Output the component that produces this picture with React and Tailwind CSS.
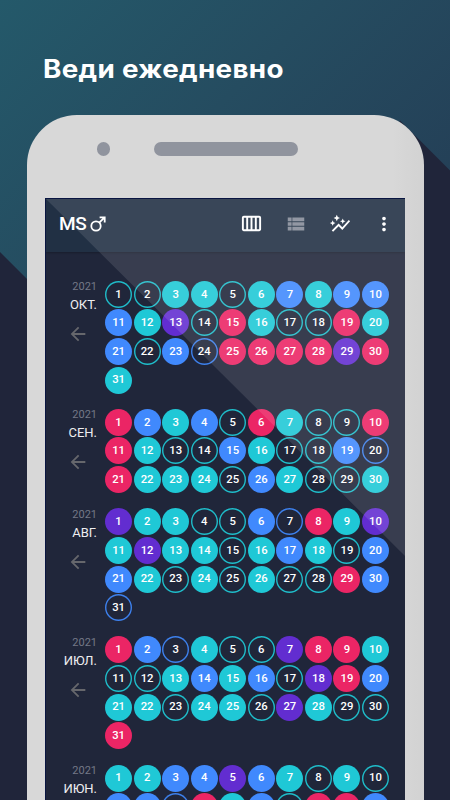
import { MdArrowBack, MdAutoGraph, MdMoreVert, MdOutlineCalendarViewWeek } from 'react-icons/md';

// t/b/p/r - filled days, T/B - outlined days
const dayStyles = {
  t: 'bg-[#1fc8d6]',
  b: 'bg-[#4089fd]',
  p: 'bg-[#622dd0]',
  r: 'bg-[#eb2565]',
  T: 'shadow-[inset_0_0_0_1.4px_#1fbcc9]',
  B: 'shadow-[inset_0_0_0_1.4px_#3d80ec]',
};

const months = [
  { year: 2021, name: 'ОКТ.', days: 'TTttTtbtbb' + 'btpTrtTTrt' + 'bTbBrrrrpr' + 't' },
  { year: 2021, name: 'СЕН.', days: 'rbtbTrtTTr' + 'rtTTbtTTbB' + 'rtttTbtTTt' },
  { year: 2021, name: 'АВГ.', days: 'pttTTbBrtp' + 'tpttTtbtTb' + 'btTtTtTTrb' + 'B' },
  { year: 2021, name: 'ИЮЛ.', days: 'rbBtTTprrt' + 'TTtbtbTprb' + 'ttTttTptTT' + 'r' },
  { year: 2021, name: 'ИЮН.', days: 'ttbbpbtTtT' + 'bbBrtbTrrb' },
];

const MaleIcon = () => (
  <svg viewBox="0 0 16 16" className="ml-[3.5px] h-[16px] w-[16px]" fill="none" stroke="#fff" strokeWidth="1.8">
    <circle cx="6" cy="10" r="4.7" />
    <path d="M9.3 6.7 14.6 1.4M9.6 1.4h5.1v5.1" />
  </svg>
);

const ListIcon = () => (
  <svg viewBox="0 0 24 24" className="h-[22px] w-[22px]" fill="#858b98">
    <path d="M3 14h4.2v-4H3v4zm0 5h4.2v-4H3v4zM3 9h4.2V5H3v4zm5 5h13v-4H8v4zm0 5h13v-4H8v4zM8 5v4h13V5H8z" />
  </svg>
);

const Header = () => (
  <header className="flex h-[53px] shrink-0 items-center bg-[#213044] pb-[4px] pl-[13px] pr-[10px] text-white shadow-[0_1px_2px_rgba(0,0,0,0.25)]">
    <span className="text-[19px] font-medium leading-none tracking-[-0.3px]">MS</span>
    <MaleIcon />
    <div className="ml-auto flex items-center">
      <MdOutlineCalendarViewWeek className="h-[23px] w-[23px]" />
      <div className="ml-[22px]">
        <ListIcon />
      </div>
      <MdAutoGraph className="ml-[22px] h-[22px] w-[22px]" />
      <MdMoreVert className="ml-[22px] h-[22px] w-[22px]" />
    </div>
  </header>
);

const Month = ({ month }) => (
  <section className="flex pb-[13.8px]">
    <div className="flex w-[51px] shrink-0 flex-col items-end">
      <span className="text-[11px] leading-[13px] text-[#747887]">{month.year}</span>
      <span className="mt-[4px] text-[13px] leading-[15px] text-[#eeeef0]">{month.name}</span>
      <MdArrowBack className="mr-[8px] mt-[11px] h-[22px] w-[22px] text-[#66676c]" />
    </div>
    <div className="ml-[7.3px] grid grid-cols-[repeat(10,28.56px)] auto-rows-[28.57px] content-start">
      {month.days.split('').map((type, i) => (
        <div key={i} className="flex items-center justify-center">
          <span
            className={`flex h-[27px] w-[27px] items-center justify-center rounded-full text-[11.3px] font-medium leading-none text-white ${dayStyles[type]}`}
          >
            {i + 1}
          </span>
        </div>
      ))}
    </div>
  </section>
);

const App = () => (
  <div className="relative flex h-[800px] w-[450px] flex-col overflow-hidden bg-[linear-gradient(135deg,#24596a_0px,#254c60_230px,#243e56_480px)] font-['Roboto','Liberation_Sans',sans-serif]">
    {/* long shadow behind the phone */}
    <div className="absolute inset-0 bg-[#20253a] [clip-path:polygon(0_252px,100px_352px,300px_352px,400px_120.5px,450px_170.5px,450px_800px,0_800px)]" />

    <h1 className="relative ml-[43px] h-[115px] origin-left scale-x-[1.09] self-start whitespace-nowrap pt-[53px] font-['Inter',sans-serif] text-[25.5px] font-bold leading-[32px] tracking-[0.3px] text-white">
      Веди ежедневно
    </h1>

    <div className="relative ml-[26.5px] flex h-[685px] w-[397.5px] flex-col rounded-t-[50px] bg-[linear-gradient(90deg,#d8d8d8_92%,#d2d2d2)]">
      <div className="flex h-[83px] shrink-0 items-start pl-[70px] pt-[27px]">
        <span className="h-[13.5px] w-[13.5px] rounded-full bg-[#90949e]" />
        <span className="ml-[43.5px] h-[13.5px] w-[144.5px] rounded-full bg-[#90949e]" />
      </div>
      <div className="relative ml-[18.5px] flex h-[602px] w-[360px] flex-col overflow-hidden border-l border-t border-[#091541] bg-[#20263a]">
        <Header />
        <main className="pt-[28.1px]">
          {months.map((month) => (
            <Month key={month.name} month={month} />
          ))}
        </main>
        {/* glass reflection */}
        <div className="pointer-events-none absolute inset-0 bg-white/11 [clip-path:polygon(0_0,100%_0,100%_357px)]" />
      </div>
    </div>
  </div>
);

export default App;
